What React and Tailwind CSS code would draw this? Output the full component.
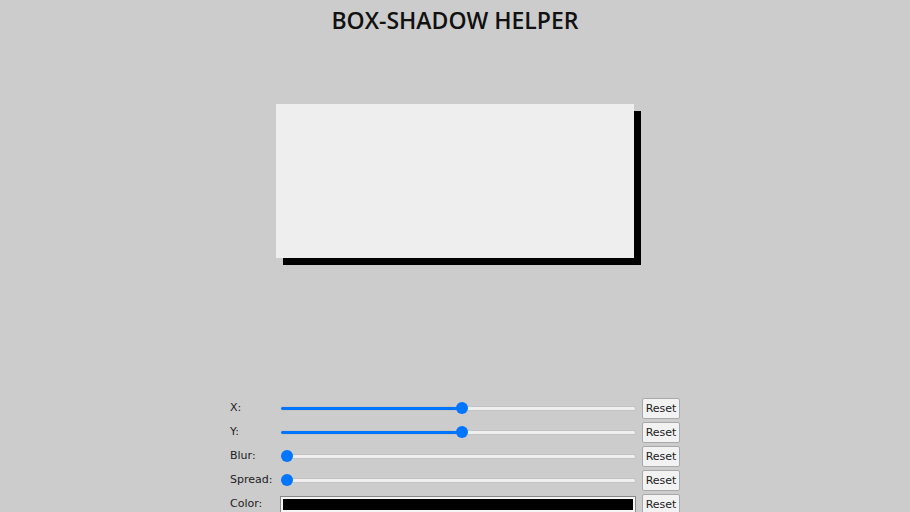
import React, { useState } from 'react';

const DEFAULTS = { x: 7, y: 7, blur: 0, spread: 0, color: '#000000' };

const Slider = ({ min, max, value, onChange }) => {
  const pct = ((value - min) / (max - min)) * 100;
  return (
    <input
      type="range"
      min={min}
      max={max}
      value={value}
      onChange={onChange}
      style={{ background: `linear-gradient(to right, #0075ff ${pct}%, #efefef ${pct}%)` }}
      className="w-full m-0 h-[5px] rounded-full appearance-none border border-[#c4c4c4] outline-none [&::-webkit-slider-thumb]:appearance-none [&::-webkit-slider-thumb]:w-[12px] [&::-webkit-slider-thumb]:h-[12px] [&::-webkit-slider-thumb]:rounded-full [&::-webkit-slider-thumb]:bg-[#0075ff] [&::-webkit-slider-thumb]:border-0"
    />
  );
};

const Row = ({ label, children, onReset }) => (
  <div className="flex items-center h-6">
    <label className="w-[50px] text-[11px] text-[#222]">{label}</label>
    <div className="w-[356px] flex items-center">{children}</div>
    <button
      onClick={onReset}
      className="ml-[6px] w-[38px] h-[21px] text-[11px] leading-none text-[#222] bg-[#f2f2f2] border border-[#a9a9a9] rounded-[2px]"
    >
      Reset
    </button>
  </div>
);

export default function App() {
  const [vals, setVals] = useState(DEFAULTS);
  const set = (k) => (e) => setVals({ ...vals, [k]: e.target.value });
  const reset = (k) => () => setVals({ ...vals, [k]: DEFAULTS[k] });

  return (
    <div className="w-[910px] h-[512px] overflow-hidden bg-[#cccccc] font-['DejaVu_Sans',sans-serif]">
      <h1 className="text-center text-[23px] font-semibold font-['Open_Sans',sans-serif] text-[#111] pt-[5px] leading-[30px]">BOX-SHADOW HELPER</h1>

      <div className="flex justify-center pt-[69px]">
        <div
          className="w-[358px] h-[154px] bg-[#eeeeee]"
          style={{ boxShadow: `${vals.x}px ${vals.y}px ${vals.blur}px ${vals.spread}px ${vals.color}` }}
        />
      </div>

      <div className="flex flex-col items-center pt-[138px]">
        <Row label="X:" onReset={reset('x')}>
          <Slider min={-300} max={300} value={vals.x} onChange={set('x')} />
        </Row>
        <Row label="Y:" onReset={reset('y')}>
          <Slider min={-300} max={300} value={vals.y} onChange={set('y')} />
        </Row>
        <Row label="Blur:" onReset={reset('blur')}>
          <Slider min={0} max={100} value={vals.blur} onChange={set('blur')} />
        </Row>
        <Row label="Spread:" onReset={reset('spread')}>
          <Slider min={0} max={100} value={vals.spread} onChange={set('spread')} />
        </Row>
        <Row label="Color:" onReset={reset('color')}>
          <div className="w-full h-[17px] border border-[#888] bg-[#f5f5f5] p-[2px]">
            <div className="w-full h-full" style={{ background: vals.color }} />
          </div>
        </Row>
      </div>
    </div>
  );
}
